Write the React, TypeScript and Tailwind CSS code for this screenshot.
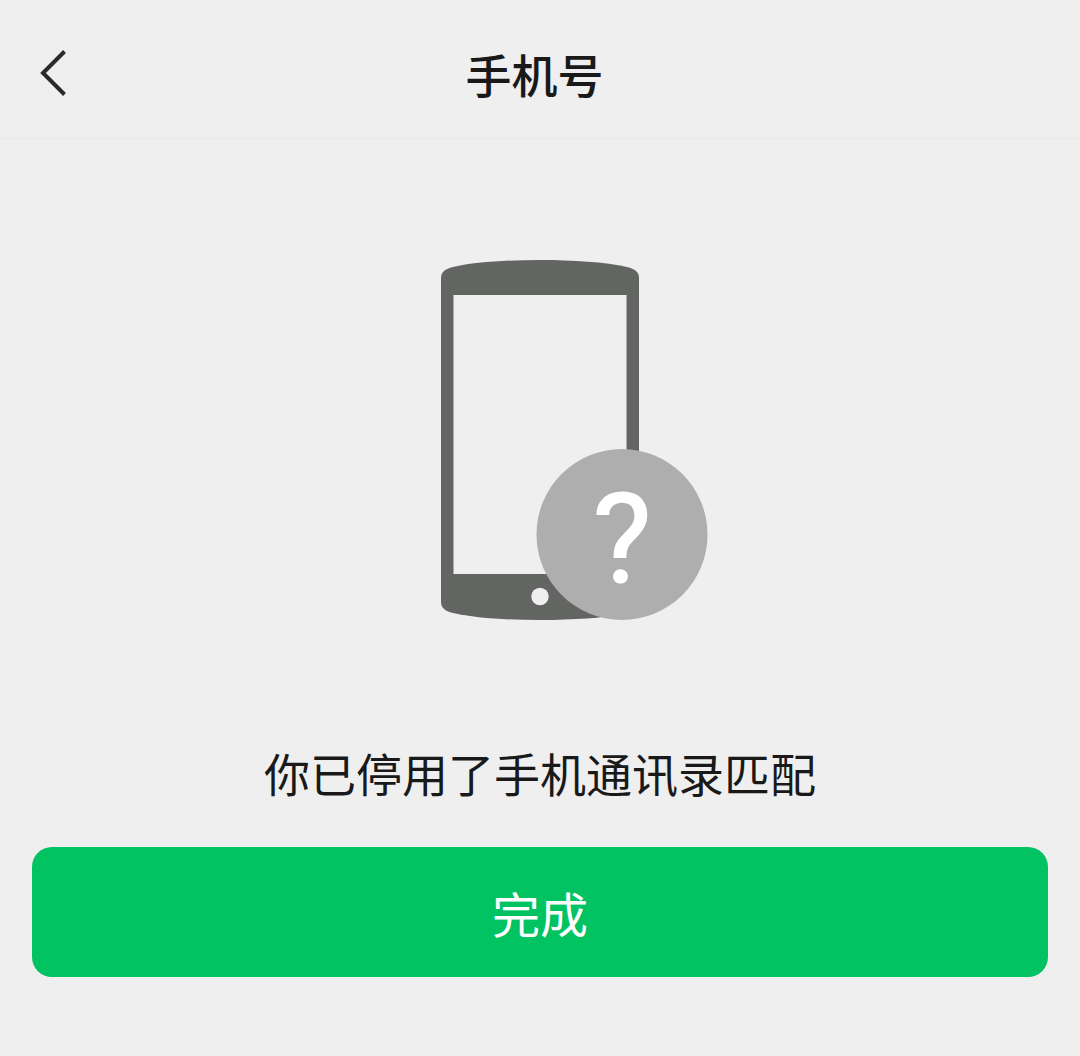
import React from 'react';

const cjk = { fontFamily: '"Noto Sans CJK SC", "Noto Sans", sans-serif' };

function PhoneIllustration() {
  return (
    <svg width="267" height="360" viewBox="0 0 267 360" className="block">
      <path
        d="M0 18C0 12 4 9 12 7C34 2 66 0 99 0C132 0 164 2 186 7C194 9 198 12 198 18V342C198 348 194 351 186 353C164 358 132 360 99 360C66 360 34 358 12 353C4 351 0 348 0 342Z"
        fill="#636562"
      />
      <rect x="12.5" y="35" width="173" height="279" fill="#efefef" />
      <circle cx="99" cy="336.5" r="8.7" fill="#efefef" />
      <circle cx="181" cy="274.5" r="85.5" fill="#aeaeae" />
      <text
        x="181"
        y="322"
        textAnchor="middle"
        fontSize="124"
        fill="#ffffff"
        stroke="#ffffff"
        strokeWidth="1.5"
        fontFamily="Roboto, sans-serif"
      >
        ?
      </text>
    </svg>
  );
}

export default function App() {
  return (
    <main className="w-[1080px] h-[1056px] bg-[#efefef] flex flex-col overflow-hidden" style={cjk}>
      <header className="h-[139px] shrink-0 border-b border-[#e9e9e9] grid grid-cols-[1fr_auto_1fr] items-start">
        <button className="justify-self-start pl-[40px] pt-[50px]">
          <svg width="27" height="46" viewBox="0 0 27 46" className="block">
            <path d="M24.5 1.5L3 23L24.5 44.5" fill="none" stroke="#2a2a2a" strokeWidth="4" />
          </svg>
        </button>
        <h1 className="pt-[39px] mr-[11px] text-[46px] leading-[68px] font-medium text-[#191919]">手机号</h1>
        <div />
      </header>

      <div className="flex flex-col items-center">
        <div className="mt-[121px] ml-[69px]">
          <PhoneIllustration />
        </div>
        <p className="mt-[117px] text-[46px] leading-[70px] text-[#191919]">你已停用了手机通讯录匹配</p>
        <div className="w-full px-[32px] mt-[40px]">
          <button className="w-full h-[130px] rounded-[20px] bg-[#01c361] text-white text-[48px]">完成</button>
        </div>
      </div>
    </main>
  );
}
